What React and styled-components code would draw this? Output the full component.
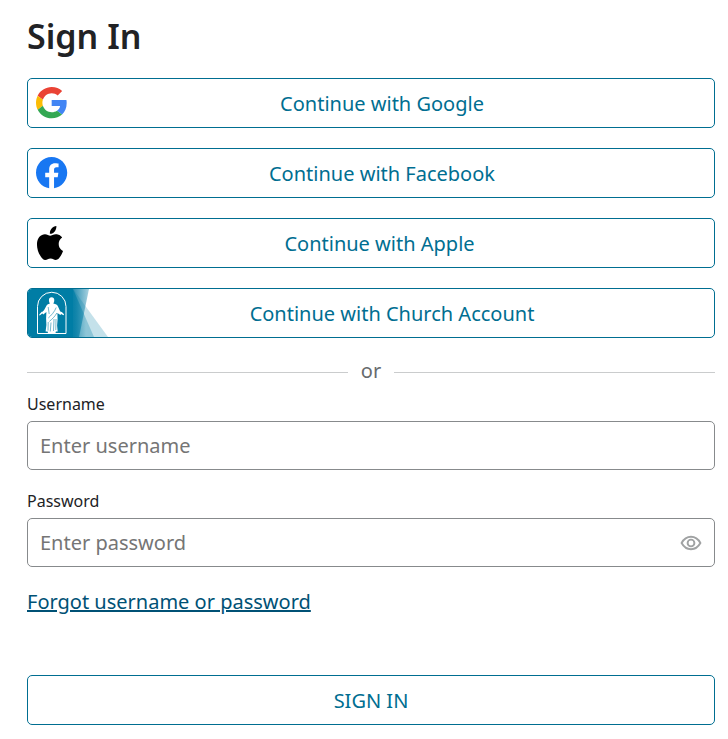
import React from "react";
import styled, { createGlobalStyle, css } from "styled-components";

const GlobalStyle = createGlobalStyle`
  *, *::before, *::after { box-sizing: border-box; }
  body {
    margin: 0;
    background: #ffffff;
    color: #212225;
    font-family: "Noto Sans", sans-serif;
    font-size: 20px;
    line-height: 28px;
  }
  button, input { font: inherit; }
`;

const Page = styled.main`
  padding: 12px 13px 14px 27px;
`;

const Title = styled.h1`
  margin: 0 0 18px;
  font-size: 34px;
  line-height: 48px;
  font-weight: 600;
`;

const outlined = css`
  width: 100%;
  height: 50px;
  padding: 0;
  border: 1px solid #006e91;
  border-radius: 5px;
  background: #ffffff;
  color: #006e91;
  cursor: pointer;
`;

const ProviderList = styled.div`
  display: grid;
  gap: 20px;
`;

const ProviderButton = styled.button`
  ${outlined}
  display: flex;
  align-items: center;
  padding-right: 18px;
  overflow: hidden;
`;

const LogoCell = styled.span`
  display: flex;
  align-items: center;
  flex: none;
  height: 48px;
  width: ${({ $bleed }) => ($bleed ? "60px" : "auto")};
  padding-left: ${({ $bleed }) => ($bleed ? 0 : 8)}px;
  svg { flex: none; display: block; }
`;

const ButtonText = styled.span`
  display: block;
  flex: 1;
  padding-top: 2px;
`;

const Divider = styled.div`
  display: flex;
  align-items: center;
  gap: 13px;
  margin: 19px 0 5px;
  line-height: 28px;
  color: #676b6e;
  &::before, &::after {
    content: "";
    flex: 1;
    border-top: 1px solid #cacccd;
  }
`;

const DividerText = styled.span`
  padding-bottom: 2px;
`;

const Field = styled.div`
  margin-bottom: 19px;
`;

const Label = styled.label`
  display: block;
  margin-bottom: 5px;
  font-size: 16px;
  line-height: 24px;
`;

const InputFrame = styled.div`
  display: flex;
  align-items: center;
  height: 49px;
  padding: 0 12px;
  border: 1px solid #878a8c;
  border-radius: 5px;
`;

const TextInput = styled.input`
  flex: 1;
  min-width: 0;
  height: 100%;
  padding: 0;
  border: 0;
  outline: 0;
  background: transparent;
  color: #212225;
  &::placeholder { color: #757575; opacity: 1; }
`;

const RevealButton = styled.button`
  display: flex;
  padding: 0;
  border: 0;
  background: none;
  color: #a0a2a3;
  cursor: pointer;
`;

const LinkRow = styled.div`
  margin: 21px 0 59px;
`;

const ForgotLink = styled.a`
  color: #005175;
  text-decoration: underline;
`;

const SubmitButton = styled.button`
  ${outlined}
  display: block;
`;

const GoogleLogo = () => (
  <svg width="32" height="32" viewBox="0 0 49 49" aria-hidden="true">
    <path fill="#EA4335" d="M24 9.5c3.54 0 6.71 1.22 9.21 3.6l6.85-6.85C35.9 2.38 30.47 0 24 0 14.62 0 6.51 5.38 2.56 13.22l7.98 6.19C12.43 13.72 17.74 9.5 24 9.5z" />
    <path fill="#4285F4" d="M46.98 24.55c0-1.57-.15-3.09-.38-4.55H24v9.02h12.94c-.58 2.96-2.26 5.48-4.78 7.18l7.73 6c4.51-4.18 7.09-10.36 7.09-17.65z" />
    <path fill="#FBBC05" d="M10.53 28.59c-.48-1.45-.76-2.99-.76-4.59s.27-3.14.76-4.59l-7.98-6.19C.92 16.46 0 20.12 0 24c0 3.88.92 7.54 2.56 10.78l7.97-6.19z" />
    <path fill="#34A853" d="M24 48c6.48 0 11.93-2.13 15.89-5.81l-7.73-6c-2.15 1.45-4.92 2.3-8.16 2.3-6.26 0-11.57-4.22-13.47-9.91l-7.98 6.19C6.51 42.62 14.62 48 24 48z" />
  </svg>
);

const FacebookLogo = () => (
  <svg width="32" height="32" viewBox="0 0 24.6 24.6" aria-hidden="true">
    <path fill="#1877F2" d="M24 12.07C24 5.4 18.63 0 12 0S0 5.4 0 12.07C0 18.1 4.39 23.1 10.13 24v-8.44H7.08v-3.49h3.05V9.41c0-3.02 1.79-4.69 4.53-4.69 1.31 0 2.68.24 2.68.24v2.97h-1.51c-1.49 0-1.96.93-1.96 1.89v2.25h3.33l-.53 3.49h-2.8V24C19.61 23.1 24 18.1 24 12.07z" />
  </svg>
);

const AppleLogo = () => (
  <svg width="27" height="34" viewBox="-30 0 844 1000" preserveAspectRatio="none" aria-hidden="true">
    <path d="M788.1 340.9c-5.8 4.5-108.2 62.2-108.2 190.5 0 148.4 130.3 200.9 134.2 202.2-.6 3.2-20.7 71.9-68.7 141.9-42.8 61.6-87.5 123.1-155.5 123.1s-85.5-39.5-164-39.5c-76.5 0-103.7 40.8-165.9 40.8s-105.6-57-155.5-127C46.7 790.7 0 663 0 541.8c0-194.4 126.4-297.5 250.8-297.5 66.1 0 121.2 43.4 162.7 43.4 39.5 0 101.1-46 176.3-46 28.5 0 130.9 2.6 198.3 99.2zm-234-181.5c31.1-36.9 53.1-88.1 53.1-139.3 0-7.1-.6-14.3-1.9-20.1-50.6 1.9-110.8 33.7-147.1 75.8-28.5 32.4-55.1 83.6-55.1 135.5 0 7.8 1.3 15.6 1.9 18.1 3.2.6 8.4 1.3 13.6 1.3 45.4 0 102.5-30.4 135.5-71.3z" />
  </svg>
);

const ChurchLogo = () => (
  <svg width="80" height="48" viewBox="0 0 80 48" aria-hidden="true">
    <defs>
      <linearGradient id="ray" x1="45" x2="61" y1="0" y2="0" gradientUnits="userSpaceOnUse">
        <stop offset="0" stopColor="#2b90b2" />
        <stop offset="1" stopColor="#a9d2e0" />
      </linearGradient>
      <linearGradient id="beam" x1="45" x2="58" y1="0" y2="0" gradientUnits="userSpaceOnUse">
        <stop offset="0" stopColor="#007da5" stopOpacity=".75" />
        <stop offset="1" stopColor="#007da5" stopOpacity=".28" />
      </linearGradient>
    </defs>
    <path fill="url(#ray)" d="M45 0H61L51 48H45z" />
    <path fill="#007da5" fillOpacity=".23" d="M45 0L80 48H45z" />
    <path fill="url(#beam)" d="M45 0L66 48H45z" />
    <path fill="#007da5" d="M0 0H45V48H0z" />
    <path fill="none" stroke="#fff" strokeWidth="1" d="M9.5 44.5V17.5A14.2 14.2 0 0 1 38 17.5V44.5z" />
    <g fill="#fff">
      <path d="M23.6 8.2c1.7 0 2.7 1.2 2.7 2.8 0 1.5-.3 2.7-1 3.6 2.6.5 4 1.2 4.7 3l2 4.5 1.9 1.8-1.5 2-3-2 .2 6.4-.5 6.3.6 6h-1.8l-.4 1.4H20l-.4-1.5h-2l.8-6.5-.3-6.5.3-6.4-3.2 2.3-1.6-1.9 2.4-2.2 1.9-3.5c.8-1.9 2.1-2.7 4-3.2-.7-1-1-2.2-1-3.6 0-1.6 1-2.8 2.7-2.8z" />
      <path d="M14 22.4l1 1.3-1.4 1.4-1.9 1.5-.6-.5.8-1.3zM33.4 22.8l1.8 1.4.9 1.5-.6.6-2-1-1.2-1.2z" />
    </g>
    <path fill="none" stroke="#1686ab" strokeWidth=".6" d="M28.2 18.5C26.5 23 23 26.5 20.3 29M28.8 24c-1.8 3.5-4.4 5.8-7.4 8.4M20.2 33l-.2 8.6M23 33.5l-.7 9M26 30l-.5 12M28 30l-.2 11M20.2 18l1 7" />
  </svg>
);

const EyeIcon = () => (
  <svg width="22" height="22" viewBox="0 0 22 22" fill="none" stroke="currentColor" strokeWidth="1.9" aria-hidden="true">
    <path d="M1.6 11C3.8 7 7 4.8 11 4.8S18.2 7 20.4 11C18.2 15 15 17.2 11 17.2S3.8 15 1.6 11z" />
    <circle cx="11" cy="11" r="3.4" />
  </svg>
);

const providers = [
  { name: "Google", Logo: GoogleLogo },
  { name: "Facebook", Logo: FacebookLogo },
  { name: "Apple", Logo: AppleLogo },
  { name: "Church Account", Logo: ChurchLogo, bleed: true },
];

export default function App() {
  return (
    <>
      <GlobalStyle />
      <Page>
        <Title>Sign In</Title>
        <form onSubmit={(e) => e.preventDefault()}>
          <ProviderList>
            {providers.map(({ name, Logo, bleed }) => (
              <ProviderButton key={name} type="button">
                <LogoCell $bleed={bleed}><Logo /></LogoCell>
                <ButtonText>Continue with {name}</ButtonText>
              </ProviderButton>
            ))}
          </ProviderList>
          <Divider><DividerText>or</DividerText></Divider>
          <Field>
            <Label htmlFor="username">Username</Label>
            <InputFrame>
              <TextInput id="username" type="text" placeholder="Enter username" autoComplete="username" />
            </InputFrame>
          </Field>
          <Field>
            <Label htmlFor="password">Password</Label>
            <InputFrame>
              <TextInput id="password" type="password" placeholder="Enter password" autoComplete="current-password" />
              <RevealButton type="button" aria-label="Show password"><EyeIcon /></RevealButton>
            </InputFrame>
          </Field>
          <LinkRow>
            <ForgotLink href="#forgot">Forgot username or password</ForgotLink>
          </LinkRow>
          <SubmitButton type="submit"><ButtonText>SIGN IN</ButtonText></SubmitButton>
        </form>
      </Page>
    </>
  );
}
